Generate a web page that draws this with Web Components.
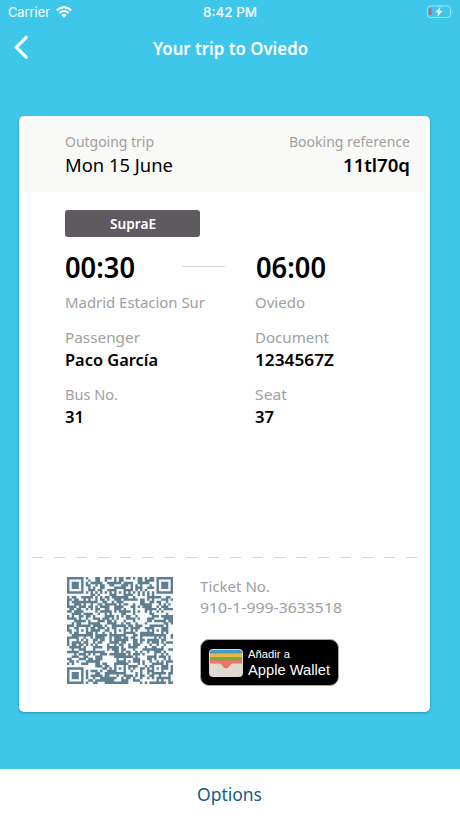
<!DOCTYPE html>
<html lang="en">
<head>
<meta charset="utf-8">
<title>Your trip to Oviedo</title>
<style>
html,body{margin:0;height:100%;background:#3ec7eb}
body{font-family:"Noto Sans","Open Sans",sans-serif;overflow:hidden}
</style>
</head>
<body>
<trip-screen></trip-screen>
<script>
const define = (name, html, init) => customElements.define(name, class extends HTMLElement {
  connectedCallback() {
    if (this.shadowRoot) return;
    const t = document.createElement('template');
    t.innerHTML = html;
    this.attachShadow({mode: 'open'}).append(t.content.cloneNode(true));
    if (init) init(this, this.shadowRoot);
  }
});

/* One line of text, fitted to a given width. */
define('text-line', `<style>
:host{display:block;white-space:nowrap}
span{display:inline-block;transform-origin:0 50%}
</style><span><slot></slot></span>`, (el, root) => {
  const s = root.querySelector('span');
  el.style.fontSize = el.getAttribute('size') + 'px';
  el.style.lineHeight = el.getAttribute('lh') + 'px';
  el.style.height = el.getAttribute('lh') + 'px';
  const w = +el.getAttribute('w');
  el.style.width = w + 'px';
  s.style.transform = 'scaleX(' + w / s.getBoundingClientRect().width + ')';
});

define('status-bar', `<style>
:host{display:flex;height:24px;padding:0 6px 0 8px;align-items:center;justify-content:space-between;color:#fff;font-family:Inter,"Liberation Sans",sans-serif}
.l{display:flex;gap:6px;align-items:center;width:173px}
.r{width:175px;display:flex;justify-content:flex-end}
svg{display:block}
text-line.t{font-weight:500}
</style>
<div class="l"><text-line size="13" lh="24" w="42">Carrier</text-line>
<svg width="16" height="12" viewBox="0 0 16 12"><g fill="none" stroke="#fff" stroke-width="2.1"><path d="M.8 4.4Q8-2 15.2 4.4"/><path d="M3.4 7Q8 3 12.6 7"/></g><path d="M5.4 8.9Q8 6.8 10.6 8.9L8 11.7Z" fill="#fff"/></svg></div>
<text-line class="t" size="13" lh="24" w="54">8:42 PM</text-line>
<div class="r"><svg width="28" height="14" viewBox="0 0 28 14"><rect x="1.5" y="1" width="23" height="11.5" rx="3" fill="none" stroke="#fff" stroke-opacity=".5"/><path d="M26 5Q27.8 6.7 26 8.5Z" fill="#fff" opacity=".55"/><rect x="2.7" y="3.2" width="2.8" height="6.8" rx=".8" fill="#c65f6d"/><path d="M14.5 1.5 9.5 7.5H12.4L11.3 12 16.5 5.8H13.5Z" fill="#fff"/></svg></div>`);

define('nav-bar', `<style>
:host{display:grid;grid-template-columns:152.5px 1fr;height:48px;align-items:center;color:#fff;font-weight:600}
svg{display:block;margin-left:12px}
text-line{margin-top:-1px}
</style>
<svg width="18" height="26" viewBox="0 0 18 26"><path d="M14.2 2.3 4.3 12.3 14.2 22.2" fill="none" stroke="#fff" stroke-width="3.2" stroke-linecap="round" stroke-linejoin="miter"/></svg>
<text-line size="18" lh="48" w="155"><slot></slot></text-line>`);

/* Version 7 code: 45 modules a side. */
define('qr-code', `<style>:host{display:block;width:106px;height:107px}svg{display:block}</style>
<svg width="106" height="107" viewBox="0 0 45 45" preserveAspectRatio="none"><rect width="45" height="45" fill="#f6fafb"/><path fill="#5f7f91"/></svg>`, (el, root) => {
  const N = 45, al = [[22,6],[6,22],[22,22],[38,22],[22,38],[38,38]];
  let seed = 910, d = '';
  const rnd = () => (seed = (seed * 1664525 + 1013904223) >>> 0) / 4294967296;
  const pattern = (x, y) => {
    for (const [a, b] of [[3,3],[N-4,3],[3,N-4]]) {
      const r = Math.max(Math.abs(x-a), Math.abs(y-b));
      if (r <= 4) return r === 3 || r < 2 ? 1 : 0;
    }
    for (const [a, b] of al) {
      const r = Math.max(Math.abs(x-a), Math.abs(y-b));
      if (r <= 2) return r === 1 ? 0 : 1;
    }
    if (x === 6 || y === 6) return (x + y + 1) % 2;
    return -1;
  };
  for (let y = 0; y < N; y++) for (let x = 0; x < N; x++) {
    const q = rnd(), f = pattern(x, y);
    if (f === 1 || (f < 0 && q < (x < 30 ? .56 : .48))) d += `M${x} ${y}h1.02v1.02h-1.02z`;
  }
  root.querySelector('path').setAttribute('d', d);
});

define('wallet-button', `<style>
:host{display:flex;box-sizing:border-box;width:139px;height:47px;border-radius:9px;background:#000;border:1px solid #a6a6a6;color:#fff;padding:8px 0 0 8px;gap:5px;font-family:"Liberation Sans",Inter,sans-serif}
svg{display:block;margin-top:1px}
</style>
<svg width="34" height="28" viewBox="0 0 34 28"><defs><clipPath id="c"><rect x=".5" y=".5" width="33" height="27" rx="3"/></clipPath></defs>
<g clip-path="url(#c)"><rect width="34" height="28" fill="#dedbce"/><rect y="1" width="34" height="5" fill="#4a9bc3"/><rect y="4.5" width="34" height="5" fill="#f2b83e"/><rect y="8" width="34" height="4" fill="#69ad50"/><path d="M0 11.3h34v3.2H23.5q-1.6 0-2.4 1.7Q19.7 19.2 17 19.2t-4.1-3Q12.1 14.5 10.5 14.5H0Z" fill="#ed7467"/></g><rect x=".5" y=".5" width="33" height="27" rx="3" fill="none" stroke="#dedbce"/></svg>
<div><text-line size="11.5" lh="13" w="42">Añadir a</text-line><text-line size="15.5" lh="17" w="82">Apple Wallet</text-line></div>`);

define('ticket-card', `<style>
:host{display:flex;flex-direction:column;box-sizing:border-box;width:411px;height:596px;margin:44px 0 0 19px;border-radius:5px;background:#fefefe;box-shadow:0 1px 3px rgba(0,60,80,.4)}
.head{display:flex;justify-content:space-between;box-sizing:border-box;height:73px;margin:3px 4px 0;padding:11px 16px 0 42px;background:#f9f9f8}
.head>div:last-child{display:flex;flex-direction:column;align-items:flex-end}
.k{color:#a0a0a0}.v{color:#000}.b{font-weight:600}
.head .v{margin-top:1px}
.tag{display:flex;justify-content:center;width:135px;height:27px;margin:18px 0 0 46px;background:#5e5a5f;color:#fff;font-weight:600;border-radius:3px}
.cols{display:grid;grid-template-columns:117px 73.5px 1fr;margin:12px 0 0 46px;height:37px}
.cols i{width:43px;height:1px;margin-top:17px;background:#d3dadc}
.grid{display:grid;grid-template-columns:190px 1fr;margin:5px 0 0 46px}
.cell{height:57px}.cell.s{height:35px}
.cell .b{margin-top:1px}
.dash{height:1.5px;margin:auto 11px 0 13px;background:repeating-linear-gradient(90deg,#cfd8da 0 11px,transparent 11px 22px)}
.foot{display:flex;height:154px;box-sizing:border-box;padding:19px 0 0 48px;gap:27px}
.info{margin-top:-1px}
.foot wallet-button{margin-top:21px}
</style>
<div class="head"><div><text-line class="k" size="15" lh="22" w="89">Outgoing trip</text-line><text-line class="v" size="18" lh="24" w="108">Mon 15 June</text-line></div>
<div><text-line class="k" size="15" lh="22" w="121">Booking reference</text-line><text-line class="v b" size="18" lh="24" w="67">11tl70q</text-line></div></div>
<div class="tag"><text-line size="14" lh="28" w="46">SupraE</text-line></div>
<div class="cols"><text-line class="v b" size="28" lh="37" w="70">00:30</text-line><i></i><text-line class="v b" size="28" lh="37" w="70">06:00</text-line></div>
<div class="grid">
<div class="cell s"><text-line class="k" size="15" lh="22" w="140">Madrid Estacion Sur</text-line></div><div class="cell s"><text-line class="k" size="15" lh="22" w="50">Oviedo</text-line></div>
<div class="cell"><text-line class="k" size="15" lh="22" w="75">Passenger</text-line><text-line class="v b" size="16" lh="23" w="93">Paco García</text-line></div>
<div class="cell"><text-line class="k" size="15" lh="22" w="74">Document</text-line><text-line class="v b" size="16" lh="23" w="79">1234567Z</text-line></div>
<div class="cell"><text-line class="k" size="15" lh="22" w="53">Bus No.</text-line><text-line class="v b" size="16" lh="23" w="19">31</text-line></div>
<div class="cell"><text-line class="k" size="15" lh="22" w="32">Seat</text-line><text-line class="v b" size="16" lh="23" w="19">37</text-line></div>
</div>
<div class="dash"></div>
<div class="foot"><qr-code></qr-code><div class="info"><text-line class="k" size="15" lh="21" w="70">Ticket No.</text-line><text-line class="k" size="15" lh="21" w="142">910-1-999-3633518</text-line><wallet-button></wallet-button></div></div>`);

define('options-bar', `<style>
:host{display:flex;justify-content:center;box-sizing:border-box;height:49px;padding-right:2px;background:#fff;color:#125f80;margin-top:auto}
</style><text-line size="18" lh="50" w="65"><slot></slot></text-line>`);

define('trip-screen', `<style>
:host{display:flex;flex-direction:column;width:460px;height:818px;background:#3ec7eb}
</style>
<status-bar></status-bar>
<nav-bar>Your trip to Oviedo</nav-bar>
<ticket-card></ticket-card>
<options-bar>Options</options-bar>`);
</script>
</body>
</html>
